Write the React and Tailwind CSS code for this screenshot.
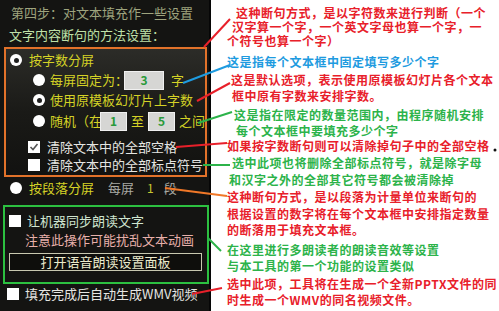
import React from "react";

const cjk = { fontFamily: '"Noto Sans CJK SC", "Noto Sans", sans-serif' };

const notes = [
  { t: "这种断句方式，是以字符数来进行判断（一个", c: "text-[#e8202a]", ml: "ml-[25px]", h: "h-[15px] mt-[5px]" },
  { t: "汉字算一个字，一个英文字母也算一个字，一", c: "text-[#e8202a]", ml: "ml-[21px]", h: "h-[14px]" },
  { t: "个符号也算一个字）", c: "text-[#e8202a]", ml: "ml-[16px]", h: "h-[14px]" },
  { t: "这是指每个文本框中固定填写多少个字", c: "text-[#1e9be0]", ml: "ml-[16px]", h: "h-[16px] mt-[6px]" },
  { t: "这是默认选项，表示使用原模板幻灯片各个文本", c: "text-[#e8202a]", ml: "ml-[20px]", h: "h-[16px] mt-[2px]" },
  { t: "框中原有字数来安排字数。", c: "text-[#e8202a]", ml: "ml-[21px]", h: "h-[16px]" },
  { t: "这是指在限定的数量范围内，由程序随机安排", c: "text-[#2cb34a]", ml: "ml-[23px]", h: "h-[16px] mt-[3px]" },
  { t: "每个文本框中要填充多少个字", c: "text-[#2cb34a]", ml: "ml-[25px]", h: "h-[15px]" },
  { t: "如果按字数断句则可以清除掉句子中的全部空格", c: "text-[#e8202a]", ml: "ml-[16px]", h: "h-[15px]" },
  { t: "选中此项也将删除全部标点符号，就是除字母", c: "text-[#2cb34a]", ml: "ml-[21px]", h: "h-[16px] mt-[2px]" },
  { t: "和汉字之外的全部其它符号都会被清除掉", c: "text-[#2cb34a]", ml: "ml-[18px]", h: "h-[16px] mt-[1px]" },
  { t: "这种断句方式，是以段落为计量单位来断句的", c: "text-[#e8202a]", ml: "ml-[16px]", h: "h-[16px] mt-[1px]" },
  { t: "根据设置的数字将在每个文本框中安排指定数量", c: "text-[#e8202a]", ml: "ml-[16px]", h: "h-[16px] mt-[1px]" },
  { t: "的断落用于填充文本框。", c: "text-[#e8202a]", ml: "ml-[16px]", h: "h-[16px]" },
  { t: "在这里进行多朗读者的朗读音效等设置", c: "text-[#2cb34a]", ml: "ml-[16px]", h: "h-[16px] mt-[4px]" },
  { t: "与本工具的第一个功能的设置类似", c: "text-[#2cb34a]", ml: "ml-[16px]", h: "h-[16px]" },
  { t: "选中此项，工具将在生成一个全新PPTX文件的同", c: "text-[#e8202a]", ml: "ml-[16px]", h: "h-[16px] mt-[2px]" },
  { t: "时生成一个WMV的同名视频文件。", c: "text-[#e8202a]", ml: "ml-[16px]", h: "h-[16px]" },
];

function Radio({ on }) {
  return (
    <span className="w-[12px] h-[12px] rounded-full bg-white flex items-center justify-center shrink-0">
      {on && <span className="w-[5px] h-[5px] rounded-full bg-[#202020]" />}
    </span>
  );
}

function Check({ on }) {
  return (
    <span className="w-[12px] h-[12px] bg-white flex items-center justify-center shrink-0">
      {on && (
        <svg width="10" height="10" viewBox="0 0 10 10">
          <path d="M1.5 5 L4 7.5 L8.5 2" stroke="#555" strokeWidth="1.6" fill="none" />
        </svg>
      )}
    </span>
  );
}

function Box({ v, w }) {
  return (
    <span className={`${w} h-[19px] bg-[#d6d6d4] border border-[#f0f0f0] flex items-center justify-center text-[#2a9a3a] font-bold text-[12px]`}>
      {v}
    </span>
  );
}

export default function App() {
  return (
    <div className="w-[499px] h-[311px] bg-white flex relative overflow-hidden" style={cjk}>
      {/* left panel */}
      <div className="w-[211px] h-full bg-[#141412] border-r-2 border-[#060606] flex flex-col text-[13px] leading-[16px] shrink-0">
        <div className="mt-[5px] pl-[11px] text-[#9ea47e]">第四步：对文本填充作一些设置</div>
        <div className="mt-[6px] pl-[9px] h-[18px] text-[#bfe0a8]">文字内容断句的方法设置：</div>
        <div className="mt-[2px] ml-[4px] w-[203px] h-[130px] border-2 border-[#e2722a] bg-gradient-to-b from-[#2c2c28] via-[#1a1a17] to-[#121210] flex flex-col pl-[4px]">
          <div className="h-[18px] mt-[2px] flex items-center gap-[7px] text-[#d4d226]">
            <Radio on />
            <span>按字数分屏</span>
          </div>
          <div className="h-[20px] mt-[1px] pl-[23px] flex items-center text-[#d4d226]">
            <Radio />
            <span className="ml-[5px]">每屏固定为：</span>
            <Box v="3" w="w-[40px] ml-[-4px]" />
            <span className="ml-[7px]">字</span>
          </div>
          <div className="h-[20px] pl-[23px] flex items-center text-[#d4d226]">
            <Radio on />
            <span className="ml-[5px]">使用原模板幻灯片上字数</span>
          </div>
          <div className="h-[20px] mt-[1px] pl-[23px] flex items-center text-[#d4d226]">
            <Radio />
            <span className="ml-[5px]">随机（在</span>
            <Box v="1" w="w-[27px] ml-[-2px]" />
            <span className="ml-[4px]">至</span>
            <Box v="5" w="w-[27px] ml-[4px]" />
            <span className="ml-[4px]">之间</span>
          </div>
          <div className="h-[18px] mt-[7px] pl-[18px] flex items-center gap-[7px] text-[#e6e6e2]">
            <Check on />
            <span>清除文本中的全部空格</span>
          </div>
          <div className="h-[18px] pl-[18px] flex items-center gap-[7px] text-[#e6e6e2]">
            <Check />
            <span>清除文本中的全部标点符号</span>
          </div>
        </div>
        <div className="h-[18px] mt-[2px] pl-[10px] flex items-center text-[#d4d226]">
          <Radio />
          <span className="ml-[7px]">按段落分屏</span>
          <span className="ml-[14px] text-[#a8a8a2]">每屏</span>
          <span className="ml-[13px] text-[12px] text-[#c8c830]">1</span>
          <span className="ml-[10px] text-[#a8a8a2]">段</span>
        </div>
        <div className="mt-[8px] ml-[3px] w-[206px] h-[79px] border-2 border-[#2cc040] flex flex-col pl-[2px] pr-[5px]">
          <div className="h-[18px] mt-[5px] pl-[2px] flex items-center gap-[6px] text-[#cfe4cf]">
            <Check />
            <span>让机器同步朗读文字</span>
          </div>
          <div className="h-[18px] mt-[1px] pl-[18px] flex items-center text-[#e8b0aa]">注意此操作可能扰乱文本动画</div>
          <div className="h-[18px] mt-[4px] ml-[2px] border border-[#c8c8b0] bg-[#0e0e0c] flex items-center justify-center text-[#ecebcc]">
            打开语音朗读设置面板
          </div>
        </div>
        <div className="h-[18px] mt-[1px] pl-[7px] flex items-center gap-[6px] text-[#e6e6e2]">
          <Check />
          <span>填充完成后自动生成WMV视频</span>
        </div>
      </div>

      {/* annotations */}
      <div className="flex-1 flex flex-col font-bold text-[12px] tracking-[0.5px] whitespace-nowrap">
        {notes.map((n, i) => (
          <div key={i} className={`${n.h} ${n.ml} ${n.c} flex items-center leading-none`}>
            {n.t}
          </div>
        ))}
      </div>

      {/* connector lines */}
      <svg className="absolute inset-0 pointer-events-none" width="499" height="311">
        <line x1="204" y1="47" x2="230" y2="19" stroke="#e8202a" strokeWidth="2" />
        <line x1="183" y1="83" x2="230" y2="65" stroke="#1e9be0" strokeWidth="2" />
        <line x1="197" y1="101" x2="230" y2="83" stroke="#e8202a" strokeWidth="2" />
        <line x1="198" y1="123" x2="232" y2="112" stroke="#2cb34a" strokeWidth="2" />
        <line x1="176" y1="147" x2="227" y2="143" stroke="#e8202a" strokeWidth="2" />
        <line x1="203" y1="165" x2="230" y2="165" stroke="#2cb34a" strokeWidth="2" />
        <line x1="165" y1="188" x2="227" y2="196" stroke="#f07828" strokeWidth="2" />
        <line x1="208" y1="238" x2="221" y2="251" stroke="#2cb34a" strokeWidth="2" />
        <line x1="192" y1="294" x2="222" y2="288" stroke="#e8202a" strokeWidth="2" />
        <circle cx="495" cy="150" r="1.5" fill="#111" />
      </svg>
    </div>
  );
}
